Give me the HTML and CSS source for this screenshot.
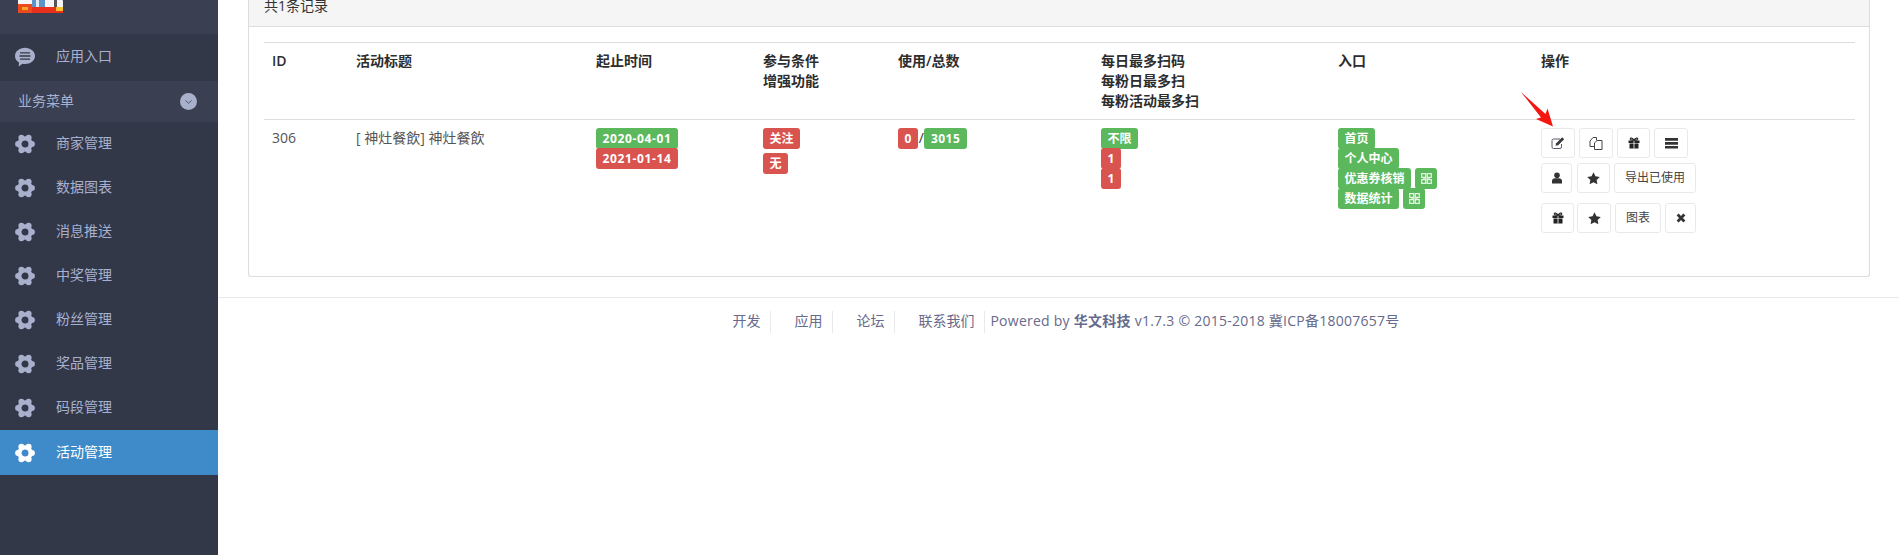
FILE: index.html
```html
<!DOCTYPE html>
<html lang="zh-CN">
<head>
<meta charset="utf-8">
<title>活动管理</title>
<link rel="stylesheet" href="styles.css">
</head>
<body>
<svg class="defs" width="0" height="0" aria-hidden="true">
  <symbol id="i-gear" viewBox="0 0 20 20">
    <circle cx="10" cy="10" r="5.600" fill="none" stroke="currentColor" stroke-width="4.200"/>
    <g fill="currentColor">
      <circle cx="16.900" cy="10" r="3"/><circle cx="3.100" cy="10" r="3"/>
      <circle cx="13.600" cy="3.800" r="3"/><circle cx="6.400" cy="3.800" r="3"/>
      <circle cx="13.600" cy="16.200" r="3"/><circle cx="6.400" cy="16.200" r="3"/>
    </g>
  </symbol>
  <symbol id="i-edit" viewBox="0 0 14 14">
    <path d="M10.500 8V11a1.500 1.500 0 0 1-1.500 1.500H2.500A1.500 1.500 0 0 1 1 11V4.500A1.500 1.500 0 0 1 2.500 3H9" fill="none" stroke="#5a5566" stroke-width="1"/>
    <path d="M4.500 9.800l.7-2.600L11.200 1.300l2 2L7.200 9.200z" fill="#3a3a3a"/>
  </symbol>
  <symbol id="i-copy" viewBox="0 0 14 14">
    <path d="M5 10.500H1V5l3-3.500h3.500v3" fill="none" stroke="#444"/>
    <path d="M5.500 13.500V7l2.500-2.500h5v9z" fill="#fff" stroke="#444"/>
  </symbol>
  <symbol id="i-gift" viewBox="0 0 12 12">
    <path d="M.5 3.600h11v2.400H.5zM1.500 6.600h9V11.500h-9z" fill="#222"/>
    <path d="M5.600 3.600h.8V11.500h-.8z" fill="#fff"/>
    <path d="M6 3.300C4.500 .6 2 .5 2.300 2.200 2.600 3.300 5 3.300 6 3.300 7 3.300 9.400 3.300 9.700 2.200 10 .5 7.500 .6 6 3.300z" fill="none" stroke="#222" stroke-width="1.100"/>
  </symbol>
  <symbol id="i-bars" viewBox="0 0 12 12">
    <path d="M0 1h12v2.500H0zM0 4.600h12v2.500H0zM0 8.200h12v2.500H0z" fill="#333"/>
  </symbol>
  <symbol id="i-user" viewBox="0 0 12 12">
    <circle cx="6" cy="3.300" r="2.800" fill="#333"/>
    <path d="M1 11.500V9c0-1.800 1.500-2.800 3-2.800h4c1.500 0 3 1 3 2.800v2.500z" fill="#333"/>
  </symbol>
  <symbol id="i-star" viewBox="0 0 12 12">
    <path d="M6 .3l1.800 3.700 4 .6-2.900 2.800.7 4L6 9.500l-3.600 1.900.7-4L.2 4.600l4-.6z" fill="#333"/>
  </symbol>
  <symbol id="i-times" viewBox="0 0 12 12">
    <path d="M2.600 2.600l6.800 6.800M9.400 2.600L2.600 9.400" fill="none" stroke="#333" stroke-width="2.800"/>
  </symbol>
  <symbol id="i-qr" viewBox="0 0 11 11">
    <path d="M.7.700h4v3.600h-4zM6.300.700h4v3.600h-4zM.7 6.700h4v3.600h-4zM6.300 6.700h4v3.600h-4z" fill="none" stroke="#e6f4e6" stroke-width="1.200"/>
    <path d="M2 5.500h7" stroke="#d4ecd4" stroke-width=".8"/>
  </symbol>
</svg>

<div class="page">
  <aside class="sidebar">
    <div class="logo-area">
      <svg class="logo" width="45" height="13" viewBox="0 0 45 13" aria-hidden="true">
        <rect width="45" height="13" rx="1" fill="#f4f4f6"/>
        <rect x="14" width="13" height="7" fill="#5d93c9"/>
        <rect x="18" width="3" height="7" fill="#dfe9f3"/>
        <rect x="0" width="14" height="4" fill="#f6f6f6"/>
        <rect x="36" width="3" height="7" fill="#555"/>
        <rect y="4" width="14" height="9" fill="#ea4a1c"/>
        <rect x="14" y="7" width="31" height="6" fill="#e8311c"/>
        <rect x="38" y="7" width="7" height="4" fill="#f6c02c"/>
        <rect x="4" y="7" width="6" height="3" fill="#f5a623"/>
      </svg>
    </div>
    <a class="entry">
      <svg class="nav-icon" viewBox="0 0 20 20" aria-hidden="true">
        <path d="M10 .8c5.500 0 10 3.600 10 8.200s-4.500 8-10 8c-1 0-1.800-.1-2.600-.3L3.700 19.500 4 15.400C1.500 14 0 11.700 0 9 0 4.400 4.500 .8 10 .8z" fill="currentColor"/>
        <path d="M5 5.800h10M4.500 9h11M5 12.200h10" stroke="#333849" stroke-width="1.300" fill="none"/>
      </svg>
      <span class="nav-text">应用入口</span>
    </a>
    <div class="section">
      <span class="nav-text">业务菜单</span>
      <svg class="chev" width="17" height="17" viewBox="0 0 17 17" aria-hidden="true">
        <circle cx="8.500" cy="8.500" r="8.500" fill="#a8b0cc"/>
        <path d="M5.500 7.500l3 2.800 3-2.800" fill="none" stroke="#4d5470" stroke-width="1"/>
      </svg>
    </div>
    <a class="nav"><svg class="nav-icon"><use href="#i-gear"/></svg><span class="nav-text">商家管理</span></a>
    <a class="nav"><svg class="nav-icon"><use href="#i-gear"/></svg><span class="nav-text">数据图表</span></a>
    <a class="nav"><svg class="nav-icon"><use href="#i-gear"/></svg><span class="nav-text">消息推送</span></a>
    <a class="nav"><svg class="nav-icon"><use href="#i-gear"/></svg><span class="nav-text">中奖管理</span></a>
    <a class="nav"><svg class="nav-icon"><use href="#i-gear"/></svg><span class="nav-text">粉丝管理</span></a>
    <a class="nav"><svg class="nav-icon"><use href="#i-gear"/></svg><span class="nav-text">奖品管理</span></a>
    <a class="nav"><svg class="nav-icon"><use href="#i-gear"/></svg><span class="nav-text">码段管理</span></a>
    <a class="nav active"><svg class="nav-icon"><use href="#i-gear"/></svg><span class="nav-text">活动管理</span></a>
  </aside>

  <main class="main">
    <section class="panel">
      <div class="panel-head">共1条记录</div>
      <div class="panel-body">
        <table class="grid">
          <colgroup>
            <col class="c1"><col class="c2"><col class="c3"><col class="c4">
            <col class="c5"><col class="c6"><col class="c7"><col class="c8">
          </colgroup>
          <thead>
            <tr>
              <th class="th-id">ID</th>
              <th>活动标题</th>
              <th>起止时间</th>
              <th>参与条件<br>增强功能</th>
              <th>使用/总数</th>
              <th>每日最多扫码<br>每粉日最多扫<br>每粉活动最多扫</th>
              <th>入口</th>
              <th>操作</th>
            </tr>
          </thead>
          <tbody>
            <tr>
              <td>306</td>
              <td>[ 神灶餐飲] 神灶餐飲</td>
              <td>
                <div class="stack">
                  <span class="label green date">2020-04-01</span>
                  <span class="label red date">2021-01-14</span>
                </div>
              </td>
              <td>
                <div class="stack spaced">
                  <span class="label red">关注</span>
                  <span class="label red">无</span>
                </div>
              </td>
              <td>
                <div class="inline-labels">
                  <span class="label red num">0</span><span class="slash">/</span><span class="label green num">3015</span>
                </div>
              </td>
              <td>
                <div class="stack">
                  <span class="label green">不限</span>
                  <span class="label red num">1</span>
                  <span class="label red num">1</span>
                </div>
              </td>
              <td>
                <div class="stack">
                  <span class="label green">首页</span>
                  <span class="label green">个人中心</span>
                  <div class="label-row">
                    <span class="label green">优惠券核销</span>
                    <span class="label green qr"><svg class="qr-icon"><use href="#i-qr"/></svg></span>
                  </div>
                  <div class="label-row">
                    <span class="label green">数据统计</span>
                    <span class="label green qr"><svg class="qr-icon"><use href="#i-qr"/></svg></span>
                  </div>
                </div>
              </td>
              <td>
                <div class="ops">
                  <div class="op-row">
                    <a class="btn w34"><svg class="ic14"><use href="#i-edit"/></svg></a>
                    <a class="btn w34"><svg class="ic14"><use href="#i-copy"/></svg></a>
                    <a class="btn w33"><svg class="ic12"><use href="#i-gift"/></svg></a>
                    <a class="btn w34"><svg class="ic13"><use href="#i-bars"/></svg></a>
                  </div>
                  <div class="op-row">
                    <a class="btn w31 loose"><svg class="ic12"><use href="#i-user"/></svg></a>
                    <a class="btn w33"><svg class="ic13"><use href="#i-star"/></svg></a>
                    <a class="btn">导出已使用</a>
                  </div>
                  <div class="op-row last">
                    <a class="btn w33 tight"><svg class="ic12"><use href="#i-gift"/></svg></a>
                    <a class="btn w34"><svg class="ic13"><use href="#i-star"/></svg></a>
                    <a class="btn">图表</a>
                    <a class="btn w31"><svg class="ic12"><use href="#i-times"/></svg></a>
                  </div>
                </div>
              </td>
            </tr>
          </tbody>
        </table>
      </div>
    </section>

    <footer class="footer">
      <a class="foot-link first">开发</a>
      <a class="foot-link">应用</a>
      <a class="foot-link">论坛</a>
      <a class="foot-link">联系我们</a>
      <span class="powered">Powered by <b>华文科技</b> v1.7.3 © 2015-2018 冀ICP备18007657号</span>
    </footer>
  </main>
</div>

<svg class="arrow" width="40" height="40" viewBox="0 0 40 40" aria-hidden="true">
  <polygon points="3,2 27.500,24 29.500,18.500 35,36.500 18,29 23,27.500" fill="#f5160f"/>
</svg>
</body>
</html>
```

FILE: styles.css
```css
* { box-sizing: border-box; }
html, body { margin: 0; padding: 0; height: 100%; }
body {
  position: relative;
  background: #fff;
  color: #676a6c;
  font: 14px/20px "Open Sans", "Noto Sans CJK SC", sans-serif;
  overflow: hidden;
}
.defs { position: absolute; }
.page { display: flex; height: 555px; }

/* sidebar */
.sidebar { width: 218px; flex: none; background: #333849; color: #a7b1cf; }
.logo-area { height: 34px; background: #3a3f51; padding-left: 18px; }
.logo { display: block; }
.entry { display: flex; align-items: center; height: 47px; padding: 0 0 1px 15px; }
.section {
  display: flex; align-items: center; justify-content: space-between;
  height: 41px; padding: 0 21px 0 18px; background: #3a3f51;
}
.chev { display: block; }
.nav { display: flex; align-items: center; height: 44px; padding-left: 15px; }
.nav.active { background: #3f8bca; color: #fff; height: 45px; }
.nav-text { padding-bottom: 2px; }
.nav-icon { width: 20px; height: 20px; margin-right: 21px; flex: none; color: #a8b0cc; }
.active .nav-icon { color: #fff; }

/* main */
.main { flex: 1; min-width: 0; }
.panel { margin: 0 29px 0 30px; border: 1px solid #ddd; border-top: 0; border-radius: 0 0 3px 3px; }
.panel-head {
  height: 27px; padding: 0 15px; line-height: 11px;
  background: #f5f5f5; border-bottom: 1px solid #ddd; color: #333;
}
.panel-body { padding: 15px 14px 15px 15px; }
.grid { width: 100%; table-layout: fixed; border-collapse: collapse; margin-bottom: 20px; color: #333; }
.c1 { width: 84px; } .c2 { width: 240px; } .c3 { width: 167px; } .c4 { width: 135px; }
.c5 { width: 203px; } .c6 { width: 237px; } .c7 { width: 203px; }
.grid th, .grid td { padding: 8px; text-align: left; vertical-align: top; }
.grid th { font-weight: 600; border-top: 1px solid #ddd; border-bottom: 1px solid #ddd; color: #2d2d2d; }
.grid td { color: #555; }
.th-id { font-weight: 700; }

/* labels */
.label {
  display: inline-flex; align-items: center; justify-content: center;
  height: 21px; padding: 0 6.500px; border-radius: 3px;
  color: #fff; font-size: 12px; font-weight: 700; line-height: 1; white-space: nowrap;
}
.green { background: #5cb85c; }
.red { background: #d9534f; }
.num { letter-spacing: .5px; }
.date { letter-spacing: .65px; }
.stack { display: flex; flex-direction: column; align-items: flex-start; }
.stack > * { margin-bottom: -1px; }
.stack.spaced > * { margin-bottom: 4px; }
.label-row { display: flex; gap: 4px; }
.qr { padding: 0 5.500px; }
.qr-icon { width: 11px; height: 11px; display: block; }
.inline-labels { display: flex; align-items: flex-start; }
.slash { width: 6px; text-align: center; line-height: 20px; color: #333; }

/* ops */
.ops { display: flex; flex-direction: column; }
.op-row { display: flex; gap: 4px; margin-bottom: 5px; }
.op-row.last { margin-top: 5px; margin-bottom: 0; }
.btn {
  display: inline-flex; align-items: center; justify-content: center;
  height: 30px; padding: 0 10px; background: #fff;
  border: 1px solid #e7eaec; border-radius: 3px;
  font-size: 12px; color: #444;
}
.w31 { width: 31px; padding: 0; } .w33 { width: 33px; padding: 0; } .w34 { width: 34px; padding: 0; }
.loose { margin-right: 1px; }
.tight { margin-right: -1px; }
.ic14 { width: 14px; height: 14px; display: block; }
.ic13 { width: 13px; height: 13px; display: block; }
.ic12 { width: 12px; height: 12px; display: block; }

/* footer */
.footer {
  display: flex; justify-content: center; align-items: flex-start;
  margin-top: 20px; padding: 13px 8px 0 0;
  border-top: 1px solid #e7eaec; color: #676a8c;
}
.foot-link { height: 22px; line-height: 20px; padding: 0 10px 0 23px; border-right: 1px solid #e7eaec; }
.powered { padding-left: 5px; line-height: 20px; letter-spacing: .25px; white-space: nowrap; }
.powered b { font-weight: 700; }

/* annotation drawn over the screenshot */
.arrow { position: absolute; left: 1518px; top: 90px; }
```
